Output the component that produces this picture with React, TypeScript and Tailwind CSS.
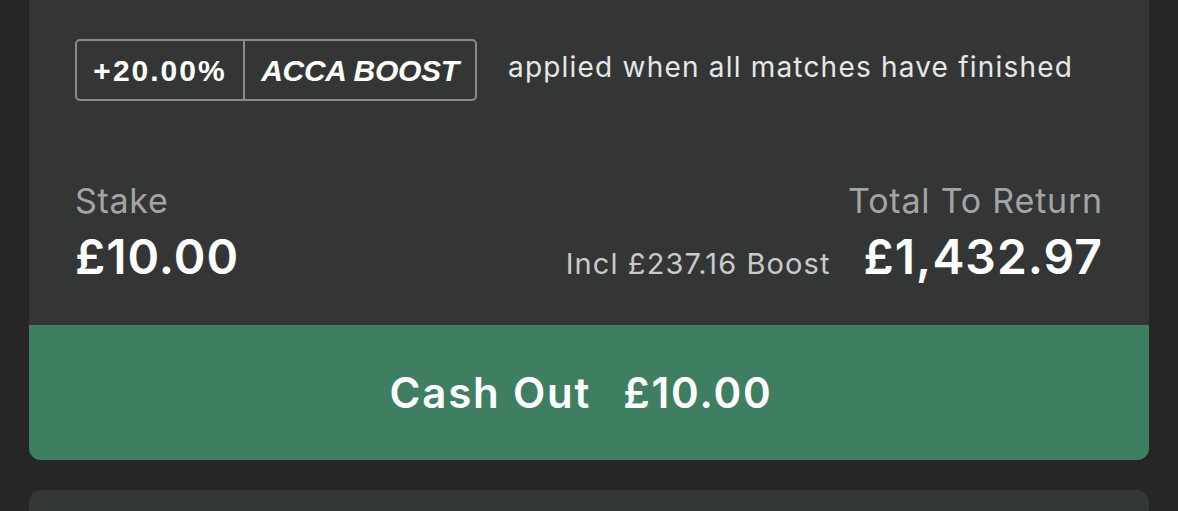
import React from "react";

// === Bet slip summary card ==================================================

const sf = { fontFamily: "Inter, 'Noto Sans', sans-serif" };
const badgeFont = { fontFamily: "'Liberation Sans', Arial, sans-serif" };

const BoostBadge: React.FC = () => (
  <div
    className="flex h-[62px] w-[402px] flex-row items-stretch rounded-[5px] border-2 border-[#8a8b8b] text-white"
    style={badgeFont}
  >
    <div className="flex w-[168px] items-center justify-center border-r-2 border-[#8a8b8b] text-[30px] font-bold tracking-[2px]">
      +20.00%
    </div>
    <div className="flex flex-1 items-center justify-center text-[30px] font-bold italic tracking-[-0.3px]">
      ACCA BOOST
    </div>
  </div>
);

export default function App() {
  return (
    <div className="h-[511px] w-[1178px] overflow-hidden bg-[#262626]" style={sf}>
      <div className="mx-[29px] flex flex-col">
        <div className="overflow-hidden rounded-b-[12px] bg-[#343636]">
          <div className="px-[46px] pt-[39px]">
            <div className="flex flex-row items-center gap-x-[31px]">
              <BoostBadge />
              <p className="mb-[6px] text-[28px] tracking-[1.2px] text-[#e6e7e7]">
                applied when all matches have finished
              </p>
            </div>

            <div className="mt-[80px] flex flex-row justify-between pb-[44px]">
              <div className="flex flex-col gap-y-[12px]">
                <p className="h-[40px] text-[34px] leading-[40px] tracking-[0.7px] text-[#a3a5a5]">
                  Stake
                </p>
                <p className="h-[48px] text-[48px] font-semibold leading-[48px] tracking-[1px] text-white">
                  £10.00
                </p>
              </div>
              <div className="flex flex-col items-end gap-y-[12px]">
                <p className="h-[40px] text-[34px] leading-[40px] tracking-[0.8px] text-[#a3a5a5]">
                  Total To Return
                </p>
                <div className="flex h-[48px] flex-row items-baseline gap-x-[33px]">
                  <span className="text-[29px] tracking-[1.1px] text-[#c9caca]">
                    Incl £237.16 Boost
                  </span>
                  <span className="text-[48px] font-semibold leading-[48px] tracking-[1px] text-white">
                    £1,432.97
                  </span>
                </div>
              </div>
            </div>
          </div>

          <button className="flex h-[135px] w-full items-center justify-center bg-[#3e7f62] pr-[16px] text-[42px] font-semibold tracking-[1.8px] text-white">
            Cash Out<span className="ml-[32px]">£10.00</span>
          </button>
        </div>

        <div className="mt-[30px] h-[40px] rounded-t-[12px] bg-[#333837]" />
      </div>
    </div>
  );
}
